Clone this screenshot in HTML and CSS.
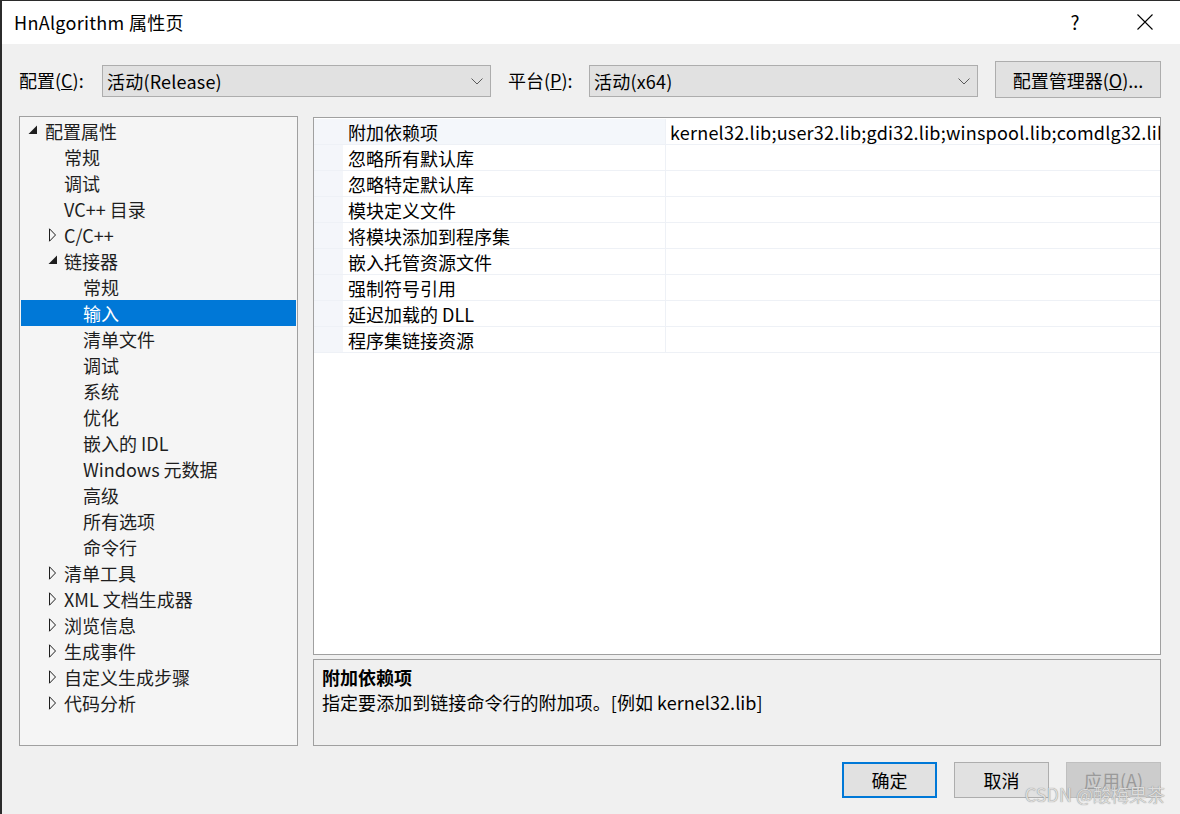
FILE: index.html
```html
<!DOCTYPE html>
<html lang="zh-CN">
<head>
<meta charset="utf-8">
<title>HnAlgorithm 属性页</title>
<link rel="stylesheet" href="styles.css">
</head>
<body>
<div class="window">
  <div class="titlebar">
    <span class="title">HnAlgorithm 属性页</span>
    <span class="tb-btn tb-help">?</span>
    <span class="tb-btn tb-close"><svg width="16" height="16" viewBox="0 0 16 16"><path d="M0.5 0.5 L15.5 15.5 M15.5 0.5 L0.5 15.5" stroke="#000" stroke-width="1.1" fill="none"/></svg></span>
  </div>
  <div class="content">
    <div class="config-row">
      <label class="lbl lbl-config">配置(<u>C</u>):</label>
      <div class="combo"><span>活动(Release)</span><svg class="chev" width="12" height="7" viewBox="0 0 12 7"><path d="M0.5 0.5 L6 6 L11.5 0.5" stroke="#5a5a5a" stroke-width="1" fill="none"/></svg></div>
      <label class="lbl lbl-platform">平台(<u>P</u>):</label>
      <div class="combo"><span>活动(x64)</span><svg class="chev" width="12" height="7" viewBox="0 0 12 7"><path d="M0.5 0.5 L6 6 L11.5 0.5" stroke="#5a5a5a" stroke-width="1" fill="none"/></svg></div>
      <button class="btn btn-manager">配置管理器(<u>O</u>)...</button>
    </div>
    <div class="main">
      <div class="tree">
        <div class="node l0"><span class="arrow"><svg width="10" height="10" viewBox="0 0 10 10"><polygon points="9,0.5 9,9 0.5,9" fill="#1e1e1e"/></svg></span><span>配置属性</span></div>
        <div class="node l1"><span class="arrow"></span><span>常规</span></div>
        <div class="node l1"><span class="arrow"></span><span>调试</span></div>
        <div class="node l1"><span class="arrow"></span><span>VC++ 目录</span></div>
        <div class="node l1"><span class="arrow"><svg class="col" width="9" height="14" viewBox="0 0 9 14"><polygon points="1.5,0.8 7.5,7 1.5,13.2" fill="none" stroke="#1e1e1e" stroke-width="1"/></svg></span><span>C/C++</span></div>
        <div class="node l1"><span class="arrow"><svg class="exp" width="10" height="10" viewBox="0 0 10 10"><polygon points="9,0.5 9,9 0.5,9" fill="#1e1e1e"/></svg></span><span>链接器</span></div>
        <div class="node l2"><span class="arrow"></span><span>常规</span></div>
        <div class="node l2 selected"><span class="arrow"></span><span>输入</span></div>
        <div class="node l2"><span class="arrow"></span><span>清单文件</span></div>
        <div class="node l2"><span class="arrow"></span><span>调试</span></div>
        <div class="node l2"><span class="arrow"></span><span>系统</span></div>
        <div class="node l2"><span class="arrow"></span><span>优化</span></div>
        <div class="node l2"><span class="arrow"></span><span>嵌入的 IDL</span></div>
        <div class="node l2"><span class="arrow"></span><span>Windows 元数据</span></div>
        <div class="node l2"><span class="arrow"></span><span>高级</span></div>
        <div class="node l2"><span class="arrow"></span><span>所有选项</span></div>
        <div class="node l2"><span class="arrow"></span><span>命令行</span></div>
        <div class="node l1"><span class="arrow"><svg class="col" width="9" height="14" viewBox="0 0 9 14"><polygon points="1.5,0.8 7.5,7 1.5,13.2" fill="none" stroke="#1e1e1e" stroke-width="1"/></svg></span><span>清单工具</span></div>
        <div class="node l1"><span class="arrow"><svg class="col" width="9" height="14" viewBox="0 0 9 14"><polygon points="1.5,0.8 7.5,7 1.5,13.2" fill="none" stroke="#1e1e1e" stroke-width="1"/></svg></span><span>XML 文档生成器</span></div>
        <div class="node l1"><span class="arrow"><svg class="col" width="9" height="14" viewBox="0 0 9 14"><polygon points="1.5,0.8 7.5,7 1.5,13.2" fill="none" stroke="#1e1e1e" stroke-width="1"/></svg></span><span>浏览信息</span></div>
        <div class="node l1"><span class="arrow"><svg class="col" width="9" height="14" viewBox="0 0 9 14"><polygon points="1.5,0.8 7.5,7 1.5,13.2" fill="none" stroke="#1e1e1e" stroke-width="1"/></svg></span><span>生成事件</span></div>
        <div class="node l1"><span class="arrow"><svg class="col" width="9" height="14" viewBox="0 0 9 14"><polygon points="1.5,0.8 7.5,7 1.5,13.2" fill="none" stroke="#1e1e1e" stroke-width="1"/></svg></span><span>自定义生成步骤</span></div>
        <div class="node l1"><span class="arrow"><svg class="col" width="9" height="14" viewBox="0 0 9 14"><polygon points="1.5,0.8 7.5,7 1.5,13.2" fill="none" stroke="#1e1e1e" stroke-width="1"/></svg></span><span>代码分析</span></div>
      </div>
      <div class="right">
        <div class="grid">
          <div class="prow current"><div class="gut"></div><div class="pname">附加依赖项</div><div class="pval">kernel32.lib;user32.lib;gdi32.lib;winspool.lib;comdlg32.lib;advapi32.lib</div></div>
          <div class="prow"><div class="gut"></div><div class="pname">忽略所有默认库</div><div class="pval"></div></div>
          <div class="prow"><div class="gut"></div><div class="pname">忽略特定默认库</div><div class="pval"></div></div>
          <div class="prow"><div class="gut"></div><div class="pname">模块定义文件</div><div class="pval"></div></div>
          <div class="prow"><div class="gut"></div><div class="pname">将模块添加到程序集</div><div class="pval"></div></div>
          <div class="prow"><div class="gut"></div><div class="pname">嵌入托管资源文件</div><div class="pval"></div></div>
          <div class="prow"><div class="gut"></div><div class="pname">强制符号引用</div><div class="pval"></div></div>
          <div class="prow"><div class="gut"></div><div class="pname">延迟加载的 DLL</div><div class="pval"></div></div>
          <div class="prow"><div class="gut"></div><div class="pname">程序集链接资源</div><div class="pval"></div></div>
        </div>
        <div class="desc">
          <div class="desc-title">附加依赖项</div>
          <div class="desc-text">指定要添加到链接命令行的附加项。[例如 kernel32.lib]</div>
        </div>
      </div>
    </div>
    <div class="footer">
      <button class="btn btn-dlg btn-default">确定</button>
      <button class="btn btn-dlg">取消</button>
      <button class="btn btn-dlg btn-disabled">应用(<u>A</u>)</button>
    </div>
  </div>
  <div class="watermark">CSDN @酸梅果茶</div>
</div>
</body>
</html>
```
FILE: styles.css
```css
* { box-sizing: border-box; }
html, body { margin: 0; padding: 0; }
body {
  width: 1180px;
  height: 814px;
  overflow: hidden;
  font-family: "Noto Sans CJK SC", sans-serif;
  font-size: 18px;
  color: #000;
  background: #2b2b2b;
}
.window {
  position: relative;
  width: 1180px;
  height: 814px;
  border-top: 1px solid #2b2b2b;
  border-left: 2px solid #2b2b2b;
  background: #f0f0f0;
  display: flex;
  flex-direction: column;
}
.titlebar {
  height: 43px;
  background: #fff;
  display: flex;
  align-items: center;
  padding-left: 12px;
  flex: none;
}
.title { font-size: 18px; line-height: 24px; margin-top: -2px; letter-spacing: 0.3px; }
.tb-btn {
  width: 70px;
  height: 43px;
  display: flex;
  align-items: center;
  justify-content: center;
}
.tb-help { margin-left: auto; font-size: 19px; margin-top: -2px; }
.tb-close svg { display: block; margin-top: -2px; }

.content {
  padding: 17px 19px 0 17px;
  display: flex;
  flex-direction: column;
}
.config-row {
  display: flex;
  height: 37px;
  align-items: flex-start;
}
.lbl {
  height: 32px;
  margin-top: 4px;
  line-height: 31px;
  flex: none;
}
.lbl-config { width: 83px; }
.lbl-platform { width: 81px; }
.combo {
  width: 389px;
  height: 32px;
  margin-top: 4px;
  border: 1px solid #adadad;
  background: #e1e1e1;
  display: flex;
  align-items: center;
  padding-left: 4px;
  line-height: 29px;
  flex: none;
  letter-spacing: 0.2px;
}
.combo + .lbl { margin-left: 17px; }
.chev { margin-left: auto; margin-right: 7px; }
.btn {
  font-family: inherit;
  font-size: 18px;
  color: #000;
  background: #e1e1e1;
  border: 1px solid #adadad;
  padding: 0;
  margin: 0;
  line-height: 1;
}
.btn-manager {
  width: 166px;
  height: 37px;
  margin-left: 17px;
  flex: none;
}

.main {
  display: flex;
  margin-top: 18px;
  height: 630px;
}
.tree {
  width: 279px;
  height: 630px;
  border: 1px solid #a0a0a0;
  background: #f5f5f5;
  padding: 1px;
  flex: none;
}
.node {
  height: 26px;
  display: flex;
  align-items: center;
  line-height: 26px;
  white-space: nowrap;
  color: #1e1e1e;
}
.node.l0 { padding-left: 7px; }
.node.l1 { padding-left: 26px; }
.node.l2 { padding-left: 45px; }
.arrow {
  width: 17px;
  height: 26px;
  flex: none;
  display: flex;
  align-items: center;
}
.arrow svg { display: block; }
.l0 .arrow svg { margin-top: -3px; }
.arrow svg.exp { margin-left: 1px; margin-top: -3px; }
.arrow svg.col { margin-left: 1px; }
.node.selected {
  background: #0078d7;
  color: #fff;
}
.right {
  width: 848px;
  margin-left: 15px;
  display: flex;
  flex-direction: column;
  flex: none;
}
.grid {
  margin-top: 1px;
  height: 539px;
  border: 1px solid #a0a0a0;
  background: #fff;
  padding-top: 1px;
  overflow: hidden;
}
.prow {
  display: flex;
  height: 26px;
  border-bottom: 1px solid #eef1f6;
}
.gut {
  width: 29px;
  background: #f4f6fa;
  flex: none;
}
.pname {
  width: 323px;
  padding-left: 5px;
  line-height: 26px;
  border-right: 1px solid #eef1f6;
  flex: none;
  white-space: nowrap;
}
.prow.current .pname { background: #f4f7fb; }
.pval {
  flex: 1;
  min-width: 0;
  padding-left: 4px;
  line-height: 26px;
  white-space: nowrap;
  overflow: hidden;
  letter-spacing: 0.22px;
}
.desc {
  margin-top: 4px;
  height: 87px;
  border: 1px solid #a0a0a0;
  background: #f0f0f0;
  padding: 5px 8px 0 8px;
}
.desc-title { font-weight: bold; line-height: 24px; }
.desc-text { line-height: 26px; letter-spacing: 0.05px; }

.footer {
  display: flex;
  justify-content: flex-end;
  gap: 17px;
  margin-top: 16px;
}
.btn-dlg {
  width: 95px;
  height: 36px;
}
.btn-default { border: 2px solid #0078d7; }
.btn-disabled {
  background: #cccccc;
  border-color: #bfbfbf;
  color: #9a9a9a;
}
.watermark {
  position: absolute;
  right: 15px;
  top: 781px;
  font-size: 18px;
  line-height: 24px;
  color: #dcdcdc;
  text-shadow: 0 0 1px #7a7a7a;
  white-space: nowrap;
}
```
